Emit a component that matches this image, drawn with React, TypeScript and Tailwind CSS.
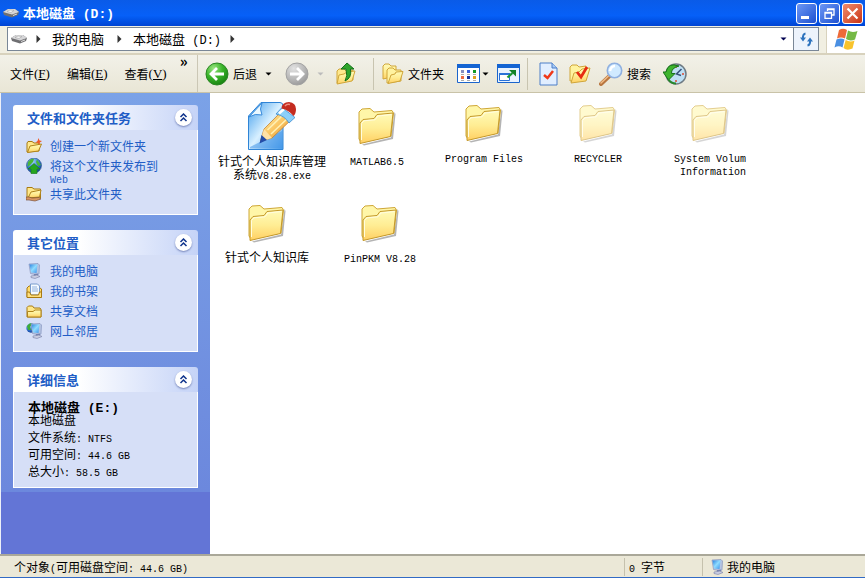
import { Fragment, type ReactNode } from "react";

const tasks = [
  { icon: "newFolder", label: "创建一个新文件夹" },
  { icon: "publish", label: "将这个文件夹发布到", second: "Web" },
  { icon: "share", label: "共享此文件夹" },
];

const places = [
  { icon: "computer", label: "我的电脑" },
  { icon: "documents", label: "我的书架" },
  { icon: "folder", label: "共享文档" },
  { icon: "network", label: "网上邻居" },
];

const details = ["文件系统: NTFS", "可用空间: 44.6 GB", "总大小: 58.5 GB"];

const rowOne = [
  { lines: ["针式个人知识库管理", "系统V8.28.exe"], kind: "app", cell: "w-[124px]" },
  { lines: ["MATLAB6.5"], kind: "folder", cell: "w-[82px] pt-1.5" },
  { lines: ["Program Files"], kind: "folder", cell: "w-[128px] pt-[3px]" },
  { lines: ["RECYCLER"], kind: "hidden", cell: "w-[96px] pt-[3px]" },
  { lines: ["System Volum", " Information"], kind: "hidden", cell: "w-[124px] pt-[3px]" },
];

const rowTwo = [
  { lines: ["针式个人知识库"], kind: "folder", cell: "w-[114px]" },
  { lines: ["PinPKM V8.28"], kind: "folder", cell: "w-[112px]" },
];

// Latin runs are set in a half-width face so that two letters fill one Chinese character
function Text({ children, small = "text-[10px]" }: { children: string; small?: string }) {
  return (
    <>
      {children.split(/([\x20-\x7e]+)/).map((part, i) =>
        /^[\x20-\x7e]+$/.test(part) ? (
          <span key={i} className={`whitespace-pre font-['Liberation_Mono',monospace] ${small} leading-0`}>{part}</span>
        ) : (
          <Fragment key={i}>{part}</Fragment>
        )
      )}
    </>
  );
}

function Gradients() {
  return (
    <svg width="0" height="0" className="absolute" aria-hidden="true">
      <defs>
        <linearGradient id="paper" x1="0" y1="0" x2="0" y2="1">
          <stop offset="0" stopColor="#fffbb8" />
          <stop offset="0.5" stopColor="#ffed94" />
          <stop offset="1" stopColor="#ffcf62" />
        </linearGradient>
        <linearGradient id="sheet" x1="0" y1="0" x2="1" y2="1">
          <stop offset="0" stopColor="#3f9cec" />
          <stop offset="0.5" stopColor="#d8f0ff" />
          <stop offset="1" stopColor="#4a9deb" />
        </linearGradient>
        <linearGradient id="pencil" x1="0" y1="0" x2="1" y2="1">
          <stop offset="0" stopColor="#fff1b0" />
          <stop offset="0.5" stopColor="#fbc765" />
          <stop offset="1" stopColor="#e08a20" />
        </linearGradient>
        <radialGradient id="green" cx="0.35" cy="0.25" r="0.8">
          <stop offset="0" stopColor="#9be582" />
          <stop offset="0.5" stopColor="#3bb52a" />
          <stop offset="1" stopColor="#168010" />
        </radialGradient>
        <radialGradient id="grey" cx="0.35" cy="0.25" r="0.8">
          <stop offset="0" stopColor="#e2e2e2" />
          <stop offset="0.6" stopColor="#b8b8b8" />
          <stop offset="1" stopColor="#989898" />
        </radialGradient>
        <radialGradient id="globe" cx="0.4" cy="0.25" r="0.8">
          <stop offset="0" stopColor="#9fd5ff" />
          <stop offset="0.6" stopColor="#2f6fd0" />
          <stop offset="1" stopColor="#123c8c" />
        </radialGradient>
        <linearGradient id="screen" x1="0" y1="0" x2="1" y2="1">
          <stop offset="0" stopColor="#2a82e0" />
          <stop offset="0.5" stopColor="#8fdcff" />
          <stop offset="1" stopColor="#3a92ea" />
        </linearGradient>
      </defs>
    </svg>
  );
}

function BigFolder() {
  return (
    <svg width="40" height="40" viewBox="0 0 40 40" aria-hidden="true">
      <path d="M5 37.500 34 30.500 37.500 5 38.500 7 36 32 7 38.500z" fill="#777" opacity="0.55" />
      <path d="M2 5 5 2 13 1.500 17 5 35 3.500 36.500 6 34 29 4 35 2 32z" fill="#fff6a8" stroke="#cfa736" />
      <path d="M3 36.500V16L6 12.500 17 11.500 20 7.500 36 6 33.500 29.500z" fill="url(#paper)" stroke="#c4982a" />
      <path d="M4.500 33V16.500L7 13.800 18 12.800 21 9 34.500 7.500" fill="none" stroke="#fffde0" />
    </svg>
  );
}

function AppIcon() {
  return (
    <svg width="50" height="50" viewBox="0 0 50 50" aria-hidden="true">
      <path d="M14 1.500H33Q36 1.500 36 5V48.500H1.500V15z" fill="url(#sheet)" stroke="#2f84d6" />
      <path d="M3 46 35 30V47.500H3z" fill="#3a90e6" opacity="0.5" />
      <path d="M15 2Q12 8 15 14 8 12 2 16z" fill="#eaf8ff" stroke="#3b8cdb" />
      <path d="M13.500 40 17 28 34 11 44 19 25 37z" fill="url(#pencil)" stroke="#c07a22" strokeWidth="0.700" />
      <path d="M20.500 29 37 13M24 33 41 17" stroke="#fff0b4" strokeWidth="1.600" />
      <path d="M17 28 25 37 13.500 40.500z" fill="#ffe2a6" />
      <path d="M14.500 34 20 39 12.500 42.500z" fill="#234da8" />
      <path d="M29 13 35 6.500 48 16.500 42 22Q38 15 29 13z" fill="#8bd0fa" stroke="#2f80cc" strokeWidth="0.700" />
      <path d="M32 12.500 37 8" stroke="#fff" strokeWidth="2.500" />
      <path d="M34.500 7.500Q35 1 42 1 49 2 49 8 49 13 46.500 15 42 9 34.500 7.500z" fill="#c42c20" />
      <path d="M38 5Q40 2.500 43 3.500" stroke="#f09080" strokeWidth="1.500" fill="none" />
    </svg>
  );
}

function SmallFolder() {
  return (
    <>
      <path d="M1 14V4.500L2.500 3H6.500L8 5H14L15 6.500V14z" fill="#ffe88c" stroke="#a87a12" />
      <path d="M1.500 14V8.500H7L9 7H15V14z" fill="url(#paper)" stroke="#b0841c" />
    </>
  );
}

function Monitor() {
  return (
    <>
      <path d="M3 1 12 .5 13.500 2 13 11 11 12 4.500 10.500z" fill="#b6c4e2" stroke="#7c8cb8" strokeWidth="0.600" />
      <path d="M3.500 1.500 11.500 1.200 10.500 10 5 9.500z" fill="url(#screen)" />
      <path d="M8 11 12 10.500 12 13H8z" fill="#7783b0" />
      <path d="M5 13 11 12 14 13.500 9 15.500 5 14.500z" fill="#c9cde2" stroke="#777fa6" strokeWidth="0.600" />
    </>
  );
}

function SmallIcon({ name }: { name: string }) {
  return (
    <svg width="16" height="16" viewBox="0 0 16 16" className="shrink-0" aria-hidden="true">
      {name === "folder" && <SmallFolder />}
      {name === "computer" && <Monitor />}
      {name === "newFolder" && (
        <>
          <path d="M1 14V5L2 3.500H6L8 5H13V13z" fill="#ffe88c" stroke="#a87a12" />
          <path d="M1.500 14.500 4 8 15.500 6 12.500 13z" fill="url(#paper)" stroke="#b0841c" />
          <path d="M12.500 0 13.500 2.500 16 3 13.800 4.500 13.500 7 12 5 9.500 4.500 11.500 3z" fill="#ee5a28" />
        </>
      )}
      {name === "publish" && (
        <>
          <circle cx="8" cy="7.500" r="7.500" fill="url(#globe)" stroke="#24507f" strokeWidth="0.600" />
          <path d="M2 4Q5 0 8 1L7 4 4 7 1.500 9zM11 1.500 15 7 12 8 10 4z" fill="#49b638" />
          <path d="M8 5.500 14 11H11V15.500H5V11H2z" fill="#25a51f" stroke="#157a18" strokeWidth="0.600" />
        </>
      )}
      {name === "share" && (
        <>
          <path d="M1 1.500H6L8 3H14.500V12H1z" fill="#ffe88c" stroke="#a87a12" />
          <path d="M2 12 5 6 15 4 13.500 11z" fill="url(#paper)" stroke="#b0841c" />
          <path d="M0 11H3L6 12 13 11.500 15 13 9 15 3 14H0z" fill="#d99662" stroke="#6d432d" strokeWidth="0.600" />
        </>
      )}
      {name === "documents" && (
        <>
          <path d="M1 14V5L3 3H6L7 5H14L15.500 6V14z" fill="#ffdc6c" stroke="#a87a12" />
          <path d="M4.500 1H11.500L13.500 3V12H4.500z" fill="#f5faff" stroke="#789bcc" />
          <path d="M6 4H11M6 6H12M6 8H12" stroke="#8fb0dd" />
          <path d="M1 14.500V9H3.500L5 12H12.500L13.500 9H15.500V14.500z" fill="#ffde7c" stroke="#a87a12" />
        </>
      )}
      {name === "network" && (
        <>
          <circle cx="5" cy="5" r="4.700" fill="url(#globe)" />
          <path d="M1 3Q4-1 6 1L4 4 5 7 2 7z" fill="#3fac35" />
          <g transform="translate(2 0)"><Monitor /></g>
        </>
      )}
    </svg>
  );
}

function Drive() {
  return (
    <svg width="16" height="10" viewBox="0 0 16 10" className="shrink-0" aria-hidden="true">
      <path d="M0 4 5 1 12 1 16 4 15 7 9 9.500 1 7z" fill="#6f6f72" />
      <path d="M0 4 5 1 12 1 16 4 9 6.500z" fill="#d6d6d8" />
      <path d="M4 3.500 7 2 11 2.500 8 4.500z" fill="#f6f6f6" stroke="#999" strokeWidth="0.500" />
      <path d="M10 7.500 14 6" stroke="#ddd" />
    </svg>
  );
}

function Arrow({ down = false, color = "#000" }: { down?: boolean; color?: string }) {
  return (
    <svg width="7" height="8" viewBox="0 0 7 8" className="shrink-0" aria-hidden="true">
      <path d={down ? "M.5 2.500H6.500L3.500 5.500z" : "M1.500 0 5.500 4 1.500 8z"} fill={color} />
    </svg>
  );
}

function RoundArrow({ forward = false }: { forward?: boolean }) {
  return (
    <svg width="24" height="24" viewBox="0 0 24 24" aria-hidden="true">
      <circle cx="12" cy="12" r="11" fill={forward ? "url(#grey)" : "url(#green)"} stroke={forward ? "#a2a2a2" : "#2b8624"} />
      <path
        d={forward ? "M5 12H18M12 6 18 12 12 18" : "M19 12H6M12 6 6 12 12 18"}
        fill="none"
        stroke="#fff"
        strokeWidth="2.800"
      />
    </svg>
  );
}

function UpIcon() {
  return (
    <svg width="22" height="24" viewBox="0 0 22 24" aria-hidden="true">
      <path d="M2 21V9L4 7H9L11 9 18 8V18z" fill="#ffe88c" stroke="#d0a63a" />
      <path d="M2 22 4 13 9 12 12 10 20 9 17 19z" fill="url(#paper)" stroke="#d0a63a" />
      <path d="M12 1 19 7H15.500Q17 16 10 19 13 14 11 7H6z" fill="#2fa52b" stroke="#14701a" />
    </svg>
  );
}

function FoldersIcon() {
  return (
    <svg width="22" height="22" viewBox="0 0 22 22" aria-hidden="true">
      <path d="M1 16V3L3 1H7L9 3H14V13z" fill="url(#paper)" stroke="#d0a63a" />
      <path d="M5 20V7L7 5H11L13 7H19V18z" fill="#fff3a0" stroke="#d0a63a" />
      <path d="M6 20.500 9 12 13 11 14 9 21 8.500 18 18z" fill="url(#paper)" stroke="#d0a63a" />
    </svg>
  );
}

function ViewsIcon() {
  return (
    <svg width="23" height="19" viewBox="0 0 23 19" aria-hidden="true">
      <path d="M.5 .5H22.500V18.500H.5z" fill="#fff" stroke="#1b65cc" />
      <path d="M0 0H23V4H0z" fill="#1464d2" />
      <path d="M4 6H7V9H4z" fill="#8790c0" /><path d="M10 6H13V9H10z" fill="#3a62df" /><path d="M16 6H19V9H16z" fill="#159b24" />
      <path d="M4 12H7V15H4z" fill="#ee6c42" /><path d="M10 12H13V15H10z" fill="#16349a" /><path d="M16 12H19V15H16z" fill="#e0a21c" />
      <path d="M4 10.500H7M10 10.500H13M16 10.500H19M4 16.500H7M10 16.500H13M16 16.500H19" stroke="#aaa" />
    </svg>
  );
}

function WindowIcon() {
  return (
    <svg width="23" height="19" viewBox="0 0 23 19" aria-hidden="true">
      <path d="M.5 .5H22.500V18.500H.5z" fill="#e9f3ff" stroke="#1b65cc" />
      <path d="M0 0H23V4H0z" fill="#1464d2" />
      <path d="M2.500 9.500H12.500V16.500H2.500z" fill="#fff" stroke="#2a72d8" />
      <path d="M2 9H13V11H2z" fill="#2a72d8" />
      <path d="M10.500 13.500 15.500 9" stroke="#1a9630" strokeWidth="2.200" />
      <path d="M12 6H19V12.500z" fill="#128226" />
    </svg>
  );
}

function CheckPageIcon() {
  return (
    <svg width="19" height="24" viewBox="0 0 19 24" aria-hidden="true">
      <path d="M1 1H13L18 6V23H1z" fill="#e1eeff" stroke="#4c7fc8" />
      <path d="M13 1V6H18" fill="#a7caf5" stroke="#4c7fc8" />
      <path d="M5 13 8.500 16 14 9" fill="none" stroke="#f03818" strokeWidth="2.500" />
    </svg>
  );
}

function CheckFolderIcon() {
  return (
    <svg width="22" height="20" viewBox="0 0 22 20" aria-hidden="true">
      <path d="M1 17V3L3 1H8L10 3 17 2V15z" fill="#fff3a0" stroke="#d0a63a" />
      <path d="M2 19 5 9 10 8 13 5 21 4 17 17z" fill="url(#paper)" stroke="#d0a63a" />
      <path d="M8 8 12 13 18 3" fill="none" stroke="#e72c12" strokeWidth="2.800" />
    </svg>
  );
}

function SearchIcon() {
  return (
    <svg width="24" height="24" viewBox="0 0 24 24" aria-hidden="true">
      <path d="M2 22 10.500 14" stroke="#b87640" strokeWidth="4" strokeLinecap="round" />
      <path d="M2 21 10 13.500" stroke="#f1bd87" strokeWidth="1.500" strokeLinecap="round" />
      <circle cx="15.500" cy="8.500" r="7.200" fill="#d0eaff" stroke="#8fb0e0" strokeWidth="1.600" />
      <path d="M11 9Q12 4 16 4" fill="none" stroke="#fff" strokeWidth="2.500" />
    </svg>
  );
}

function HistoryIcon() {
  return (
    <svg width="24" height="22" viewBox="0 0 24 22" aria-hidden="true">
      <circle cx="13" cy="11" r="10" fill="#bfe0f4" stroke="#6f7b84" strokeWidth="1.500" />
      <path d="M13 3V5M21 11H19M13 19V17" stroke="#e04a30" strokeWidth="1.500" />
      <path d="M18.500 6 13.500 11 18 12.500" fill="none" stroke="#38527a" strokeWidth="1.500" />
      <path d="M16 3Q5-1 3 9L0 9 5.500 17 12 10.500H8.500Q8 5 16 3z" fill="#3fb42e" stroke="#17721a" />
      <path d="M5 16Q8 20.500 13 20.500" stroke="#28862a" strokeWidth="2" fill="none" />
    </svg>
  );
}

function WindowsFlag() {
  return (
    <svg width="24" height="23" viewBox="0 0 24 23" aria-hidden="true">
      <path d="M5 2Q9-.5 13 2L11 10.500Q7 8.500 3 10.500z" fill="#ee6a38" />
      <path d="M14 2.500Q18 5 23.500 3L21 11.500Q16 13.500 12 11z" fill="#75b945" />
      <path d="M2.500 11.500Q7 9.500 10.500 11.500L8.500 19.500Q5 17 .5 19.500z" fill="#4a8fe2" />
      <path d="M11.700 12Q16 14.500 20.500 12.500L18.500 20.500Q13 23 9.500 20z" fill="#f8c32c" />
    </svg>
  );
}

function Chevron() {
  return (
    <svg width="9" height="9" viewBox="0 0 9 9" aria-hidden="true">
      <path d="M1.500 4 4.500 1 7.500 4M1.500 8 4.500 5 7.500 8" fill="none" stroke="#10348c" strokeWidth="1.500" />
    </svg>
  );
}

function Panel({ title, children }: { title: string; children: ReactNode }) {
  return (
    <section>
      <header className="flex h-[25px] items-center justify-between rounded-t-[3px] bg-linear-to-r from-white from-35% to-[#c5d3f7] pr-1.5 pl-3.5">
        <h2 className="text-[13px] leading-4 font-bold text-[#215dc6]">{title}</h2>
        <button
          aria-label={title}
          className="flex size-[17px] items-center justify-center rounded-full bg-white shadow-[0_1px_2px_#7483b8]"
        >
          <Chevron />
        </button>
      </header>
      <div className="border border-t-0 border-white bg-[#d6dff7] px-3 text-[12px]">{children}</div>
    </section>
  );
}

function TaskLink({ icon, label, second }: { icon: string; label: string; second?: string }) {
  return (
    <a href="#" className="flex gap-2 text-[#215dc6]">
      <SmallIcon name={icon} />
      <span className="leading-4">
        {label}
        {second && <span className="block h-2 leading-2"><Text>{second}</Text></span>}
      </span>
    </a>
  );
}

function FileItem({ lines, kind, cell }: { lines: string[]; kind: string; cell: string }) {
  return (
    <button className={`flex shrink-0 flex-col items-center ${cell}`}>
      <span className={kind === "hidden" ? "opacity-55" : ""}>{kind === "app" ? <AppIcon /> : <BigFolder />}</span>
      <span className={`flex flex-col text-[12px] leading-[13px] whitespace-nowrap ${kind === "app" ? "mt-[3px]" : "mt-1.5"}`}>
        {lines.map((line) => (
          <span key={line}><Text>{line}</Text></span>
        ))}
      </span>
    </button>
  );
}

function MenuItem({ label, accessKey }: { label: string; accessKey: string }) {
  return (
    <button className="flex items-center whitespace-nowrap">
      {label}
      <span className="font-['Liberation_Serif',serif] text-[13px]">(<u>{accessKey}</u>)</span>
    </button>
  );
}

export default function App() {
  return (
    <div className="min-h-screen bg-white pr-0.5 pb-[3px] font-['Noto_Sans_CJK_SC',sans-serif] text-[12px] text-black">
      <Gradients />
      <div className="flex min-h-[calc(100vh-3px)] flex-col">
        <header className="flex h-[26px] items-center justify-between bg-linear-to-b from-[#0a5be8] via-[#0660f8] via-60% to-[#0044d4] pr-0.5 pl-[3px]">
          <h1 className="flex items-center gap-1 text-[13px] leading-4 font-bold text-white">
            <Drive />
            <span><Text small="text-[13px]">本地磁盘 (D:)</Text></span>
          </h1>
          <div className="flex gap-0.5">
            <button aria-label="最小化" className="flex size-[21px] items-end rounded-[3px] border border-white bg-linear-to-br from-[#6d97f5] to-[#1d4fd0] p-1">
              <span className="h-[3px] w-2 bg-white" />
            </button>
            <button aria-label="还原" className="flex size-[21px] items-center justify-center rounded-[3px] border border-white bg-linear-to-br from-[#6d97f5] to-[#1d4fd0]">
              <svg width="11" height="11" viewBox="0 0 11 11" aria-hidden="true">
                <path d="M3.500 3V1H10V7H8M3.500 1.500H10M1 4.500H7.500V10.500H1zM1 5H7.500" fill="none" stroke="#fff" strokeWidth="1.300" />
              </svg>
            </button>
            <button aria-label="关闭" className="flex size-[21px] items-center justify-center rounded-[3px] border border-white bg-linear-to-br from-[#f08a6c] to-[#c9300c]">
              <svg width="13" height="13" viewBox="0 0 13 13" aria-hidden="true">
                <path d="M1.500 1.500 11.500 11.500M11.500 1.500 1.500 11.500" stroke="#fff" strokeWidth="2.200" />
              </svg>
            </button>
          </div>
        </header>

        <div className="flex h-[29px] items-stretch border-b-2 border-[#d8d2bd] bg-[#f1efe2] pl-[7px]">
          <nav className="mt-px mb-0.5 flex min-w-0 flex-1 items-center border border-[#7a8797] bg-white pl-[3px]">
            <Drive />
            <span className="ml-2"><Arrow color="#333" /></span>
            <a href="#" className="ml-2.5 text-[13px] leading-4">我的电脑</a>
            <span className="ml-3"><Arrow color="#333" /></span>
            <a href="#" className="ml-2.5 text-[13px] leading-4"><Text small="text-[12px]">本地磁盘 (D:)</Text></a>
            <span className="ml-2"><Arrow color="#333" /></span>
            <button aria-label="地址列表" className="mr-1.5 ml-auto"><Arrow down color="#000050" /></button>
          </nav>
          <button aria-label="刷新" className="mt-px mb-0.5 flex w-[25px] items-center justify-center border border-l-0 border-[#7a8797] bg-[#edf3fc]">
            <svg width="15" height="15" viewBox="0 0 15 15" aria-hidden="true">
              <path d="M6.500 1.500Q3.500 2 4 7M8.500 13.500Q11.500 13 11 8" fill="none" stroke="#2e73be" strokeWidth="2" />
              <path d="M1 5.500H7L4 9.500zM8 9.500H14L11 5.500z" fill="#2e73be" />
            </svg>
          </button>
          <div className="ml-[7px] flex w-[39px] items-center justify-center border-l border-[#d8d2bd] bg-white">
            <WindowsFlag />
          </div>
        </div>

        <div className="flex h-[38px] items-center border-b border-[#c9c3a8] bg-linear-to-b from-[#f2f1e8] to-[#e9e6d6]">
          <div className="flex h-full w-[198px] shrink-0 items-center gap-[17px] border-r border-[#cbc7b5] pl-2.5">
            <MenuItem label="文件" accessKey="F" />
            <MenuItem label="编辑" accessKey="E" />
            <MenuItem label="查看" accessKey="V" />
            <button aria-label="更多" className="-ml-1 self-start text-[15px] leading-3 font-bold">»</button>
          </div>
          <button className="ml-[7px] flex items-center gap-1"><RoundArrow />后退</button>
          <button aria-label="后退列表" className="ml-2"><Arrow down /></button>
          <button aria-label="前进" className="ml-[13px]"><RoundArrow forward /></button>
          <button aria-label="前进列表" className="ml-2"><Arrow down color="#bbb" /></button>
          <button aria-label="向上" className="ml-[11px]"><UpIcon /></button>
          <div className="ml-4 h-8 border-l border-[#c8c4b0]" />
          <button className="ml-2 flex items-center gap-1"><FoldersIcon />文件夹</button>
          <button aria-label="查看方式" className="ml-[13px] flex items-center gap-0.5"><ViewsIcon /><Arrow down /></button>
          <button aria-label="全屏" className="ml-2"><WindowIcon /></button>
          <div className="ml-[7px] h-8 border-l border-[#c8c4b0]" />
          <button aria-label="选择" className="ml-[11px]"><CheckPageIcon /></button>
          <button aria-label="选择文件夹" className="ml-[11px]"><CheckFolderIcon /></button>
          <button className="ml-2 flex items-center gap-1"><SearchIcon />搜索</button>
          <button aria-label="历史" className="ml-3"><HistoryIcon /></button>
        </div>

        <div className="flex flex-1 border-l border-[#edf0f8]">
          <aside className="w-[209px] shrink-0 bg-[#6375d6]">
            <div className="flex flex-col gap-[15px] bg-linear-to-b from-[#7ba2e7] to-[#6c88dd] px-3 pt-3 pb-1">
              <Panel title="文件和文件夹任务">
                <div className="flex h-[84px] flex-col gap-1 pt-2">
                  {tasks.map((item) => <TaskLink key={item.label} {...item} />)}
                </div>
              </Panel>
              <Panel title="其它位置">
                <div className="flex flex-col gap-1 pt-2 pb-3">
                  {places.map((item) => <TaskLink key={item.label} {...item} />)}
                </div>
              </Panel>
              <Panel title="详细信息">
                <div className="pt-2 pb-2 pl-0.5">
                  <p className="text-[13px] leading-[13px] font-bold"><Text small="text-[13px]">本地磁盘 (E:)</Text></p>
                  <p className="leading-[13px]">本地磁盘</p>
                  <div className="pt-0.5">
                    {details.map((line) => <p key={line} className="leading-[17px]"><Text>{line}</Text></p>)}
                  </div>
                </div>
              </Panel>
            </div>
          </aside>
          <main className="min-w-0 flex-1 pt-2">
            <div className="flex gap-0.5">
              {rowOne.map((item) => <FileItem key={item.lines[0]} {...item} />)}
            </div>
            <div className="mt-6 flex">
              {rowTwo.map((item) => <FileItem key={item.lines[0]} {...item} />)}
            </div>
          </main>
        </div>

        <footer className="flex h-6 items-center border-t-2 border-b border-t-[#aaa899] border-b-[#316ac5] bg-[#ebe8d7]">
          <p className="flex-1 pl-3.5"><Text>个对象(可用磁盘空间: 44.6 GB)</Text></p>
          <p className="w-[78px] border-l border-[#c5c1ad] pl-1"><Text>0 字节</Text></p>
          <p className="flex w-[163px] items-center gap-0.5 border-l border-[#c5c1ad] pl-1.5"><SmallIcon name="computer" />我的电脑</p>
        </footer>
      </div>
    </div>
  );
}
